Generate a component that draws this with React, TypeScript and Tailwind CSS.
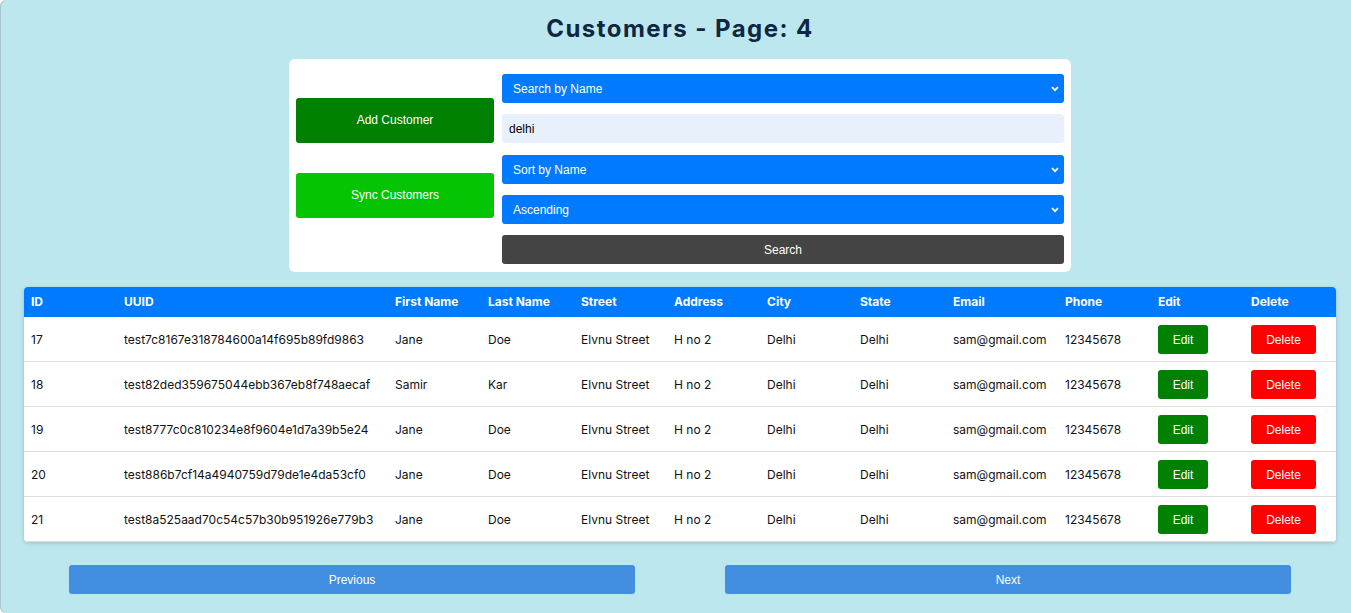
import React from "react";

const rows = [
  { id: 17, uuid: "test7c8167e318784600a14f695b89fd9863", first: "Jane", last: "Doe" },
  { id: 18, uuid: "test82ded359675044ebb367eb8f748aecaf", first: "Samir", last: "Kar" },
  { id: 19, uuid: "test8777c0c810234e8f9604e1d7a39b5e24", first: "Jane", last: "Doe" },
  { id: 20, uuid: "test886b7cf14a4940759d79de1e4da53cf0", first: "Jane", last: "Doe" },
  { id: 21, uuid: "test8a525aad70c54c57b30b951926e779b3", first: "Jane", last: "Doe" },
];

const arial = { fontFamily: '"Liberation Sans", Arial, sans-serif' };

function Chevron() {
  return (
    <svg
      className="pointer-events-none absolute right-[5px] top-1/2 -translate-y-1/2"
      width="8"
      height="6"
      viewBox="0 0 8 6"
    >
      <path d="M1 1.2 L4 4.2 L7 1.2" fill="none" stroke="white" strokeWidth="1.8" />
    </svg>
  );
}

function Select({ label }: { label: string }) {
  return (
    <div className="relative h-[29px] w-full">
      <select
        className="h-full w-full appearance-none rounded-[3px] bg-[#007bff] pl-[11px] text-[12px] text-white outline-none"
        style={arial}
        defaultValue={label}
      >
        <option>{label}</option>
      </select>
      <Chevron />
    </div>
  );
}

export default function App() {
  const cols = [
    { h: "ID", w: "w-[93px]" },
    { h: "UUID", w: "w-[271px]" },
    { h: "First Name", w: "w-[93px]" },
    { h: "Last Name", w: "w-[93px]" },
    { h: "Street", w: "w-[93px]" },
    { h: "Address", w: "w-[93px]" },
    { h: "City", w: "w-[93px]" },
    { h: "State", w: "w-[93px]" },
    { h: "Email", w: "w-[112px]" },
    { h: "Phone", w: "w-[93px]" },
    { h: "Edit", w: "w-[93px]" },
    { h: "Delete", w: "flex-1" },
  ];
  return (
    <div
      className="h-[613px] w-[1351px] overflow-hidden"
      style={{ fontFamily: "Inter, sans-serif" }}
    >
      <div className="h-[613px] w-[1360px] rounded-l-[6px] bg-[#bde7ef] shadow-[inset_1px_0_0_#a8c9d0]">
        <h1 className="pt-[14px] text-center text-[24px] font-bold leading-[30px] tracking-[1.45px] text-[#0f2742]">
          Customers - Page: 4
        </h1>
        <div className="mx-auto mt-[15px] flex h-[213px] w-[782px] rounded-[6px] bg-white pl-[7px] pr-[7px] pt-[15px] pb-[8px]">
          <div className="flex w-[198px] flex-col pt-[24px]" style={arial}>
            <button className="h-[45px] w-full rounded-[3px] bg-[#008000] pb-[1px] text-[12px] text-white">
              Add Customer
            </button>
            <button className="mt-[30px] h-[45px] w-full rounded-[3px] bg-[#04c404] pb-[1px] text-[12px] text-white">
              Sync Customers
            </button>
          </div>
          <div className="ml-[8px] flex flex-1 flex-col gap-[11px]">
            <Select label="Search by Name" />
            <input
              className="h-[29px] w-full rounded-[3px] bg-[#e8f0fe] px-[7px] text-[12px] text-black outline-none"
              style={arial}
              defaultValue="delhi"
            />
            <div className="pt-[1px]">
              <Select label="Sort by Name" />
            </div>
            <Select label="Ascending" />
            <button
              className="h-[29px] w-full rounded-[3px] bg-[#444444] text-[12px] text-white"
              style={arial}
            >
              Search
            </button>
          </div>
        </div>

        <div className="mx-[24px] mt-[15px] overflow-hidden rounded-[4px] bg-white shadow-[0_1px_4px_rgba(0,0,0,0.18)]">
          <div className="flex h-[30px] items-center bg-[#007bff] text-[12px] font-bold text-white">
            {cols.map((c) => (
              <div key={c.h} className={`${c.w} shrink-0 pl-[7px]`}>
                {c.h}
              </div>
            ))}
          </div>
          {rows.map((r) => (
            <div
              key={r.id}
              className="flex h-[45px] items-center border-b border-[#dddddd] pt-[1px] text-[12px] text-[#111111]"
            >
              <div className="w-[93px] shrink-0 pl-[7px]">{r.id}</div>
              <div className="w-[271px] shrink-0 pl-[7px]">{r.uuid}</div>
              <div className="w-[93px] shrink-0 pl-[7px]">{r.first}</div>
              <div className="w-[93px] shrink-0 pl-[7px]">{r.last}</div>
              <div className="w-[93px] shrink-0 pl-[7px]">Elvnu Street</div>
              <div className="w-[93px] shrink-0 pl-[7px]">H no 2</div>
              <div className="w-[93px] shrink-0 pl-[7px]">Delhi</div>
              <div className="w-[93px] shrink-0 pl-[7px]">Delhi</div>
              <div className="w-[112px] shrink-0 pl-[7px]">sam@gmail.com</div>
              <div className="w-[93px] shrink-0 pl-[7px]">12345678</div>
              <div className="w-[93px] shrink-0 pl-[7px]">
                <button
                  className="h-[29px] w-[50px] rounded-[3px] bg-[#008000] text-[12px] text-white"
                  style={arial}
                >
                  Edit
                </button>
              </div>
              <div className="flex-1 pl-[7px]">
                <button
                  className="h-[29px] w-[65px] rounded-[3px] bg-[#ff0000] text-[12px] text-white"
                  style={arial}
                >
                  Delete
                </button>
              </div>
            </div>
          ))}
        </div>

        <div className="mt-[23px] flex gap-[90px] px-[69px]" style={arial}>
          <button className="h-[29px] flex-1 rounded-[3px] bg-[#428ee0] text-[12px] text-white">
            Previous
          </button>
          <button className="h-[29px] flex-1 rounded-[3px] bg-[#428ee0] text-[12px] text-white">
            Next
          </button>
        </div>
      </div>
    </div>
  );
}
